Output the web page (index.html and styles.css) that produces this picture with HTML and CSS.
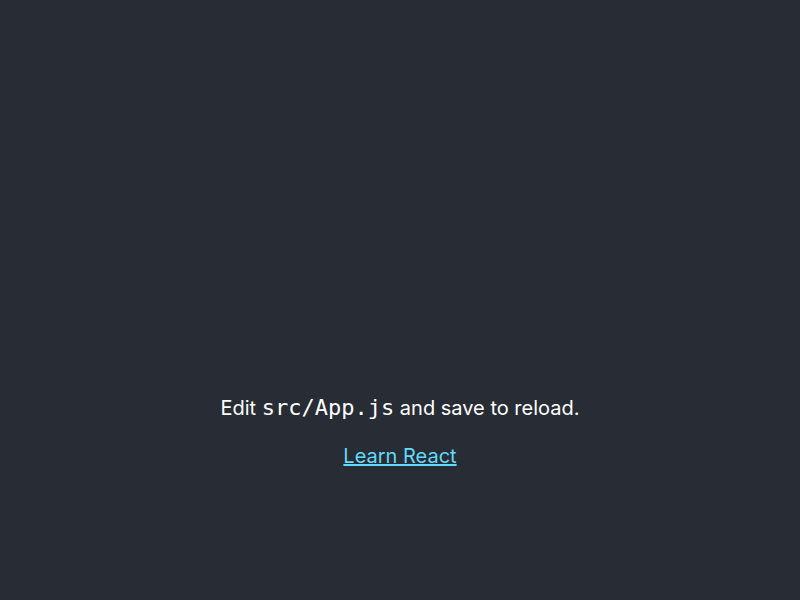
FILE: index.html
```html
<!DOCTYPE html>
<html lang="en">
<head>
<meta charset="utf-8">
<title>React App</title>
<link rel="stylesheet" href="styles.css">
</head>
<body>
<div class="app">
  <header class="app-header">
    <div class="app-logo"></div>
    <p class="app-text">Edit <code class="code">src/App.js</code> and save to reload.</p>
    <a class="app-link" href="#">Learn React</a>
  </header>
</div>
</body>
</html>
```
FILE: styles.css
```css
html, body {
  margin: 0;
  padding: 0;
}
body {
  font-family: Inter, "Noto Sans", sans-serif;
  background: #282c34;
}
.app {
  text-align: center;
}
.app-header {
  background-color: #282c34;
  min-height: 100vh;
  display: flex;
  flex-direction: column;
  align-items: center;
  justify-content: center;
  font-size: 20px;
  color: #ffffff;
}
.app-logo {
  height: 240px;
  width: 240px;
}
.app-text {
  margin: 22px 0 24px;
}
.code {
  font-family: "DejaVu Sans Mono", monospace;
  font-size: 22px;
}
.app-link {
  color: #61dafb;
}
```
